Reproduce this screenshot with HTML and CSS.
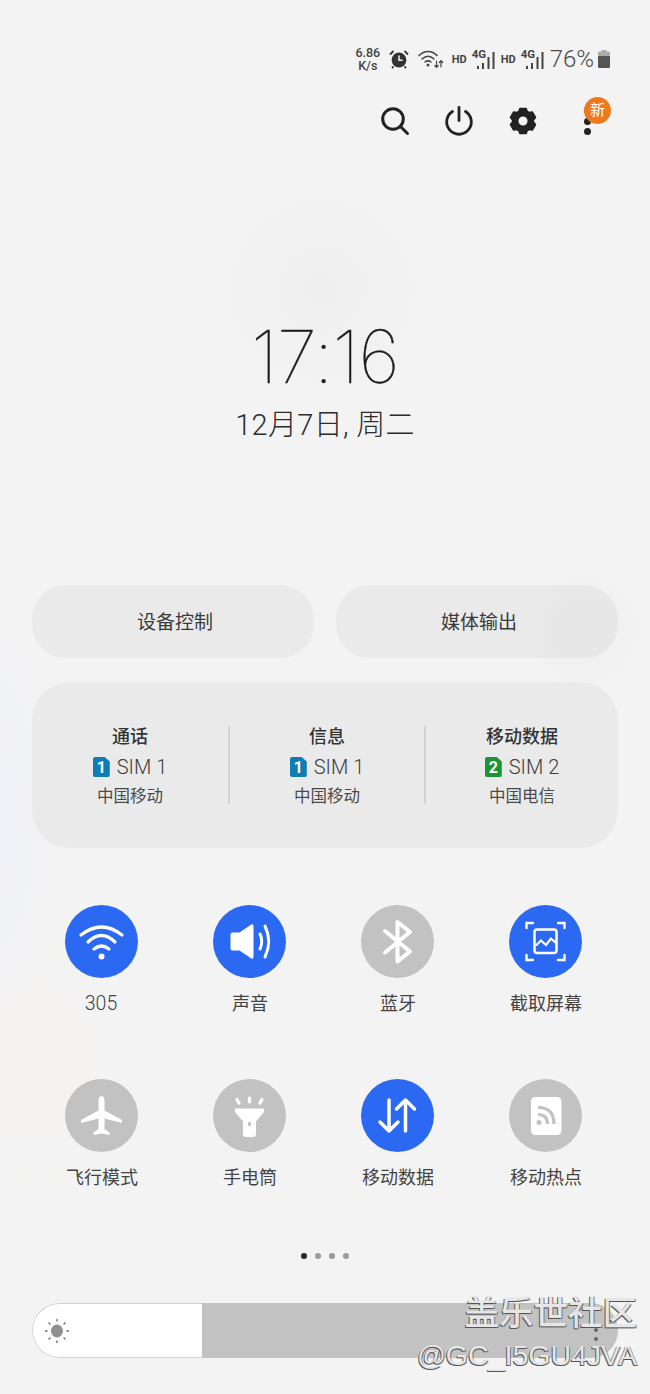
FILE: index.html

```html
<!DOCTYPE html>
<html lang="zh-CN">

<head>
    <meta charset="UTF-8">
    <meta name="viewport" content="width=device-width, initial-scale=1.0">
    <title>快捷面板</title>
    <link rel="stylesheet" href="styles.css">
</head>

<body>
    <div class="panel">

        <!-- status bar -->
        <div class="status">
            <div class="speed"><span>6.86</span><span>K/s</span></div>
            <svg class="alarm" viewBox="0 0 20 20" width="20" height="20">
                <circle cx="10" cy="11" r="7.4" fill="#333"/>
                <path d="M10 6.5v4.8h3.6" fill="none" stroke="#f3f3f3" stroke-width="1.5"/>
                <path d="M1 5.5 4.5 2M19 5.5 15.500 2M4.500 17.500 3 19M15.500 17.500 17 19" stroke="#333" stroke-width="1.8" fill="none"/>
            </svg>
            <svg class="wifi-small" viewBox="0 0 26 20" width="26" height="20">
                <g fill="none" stroke="#444" stroke-width="1.5" stroke-linecap="round">
                    <path d="M1 6.500C6.500 1 14 1 19 6.500"/>
                    <path d="M4 10c4-3.500 8.500-3.500 12 0"/>
                    <path d="M7 13c2-1.500 4-1.500 6 0"/>
                    <path d="M18.500 12v6M16.800 16.500l1.700 1.800 1.700-1.800M23 18v-6M21.300 13.500l1.700-1.800 1.700 1.800" stroke-width="1.200"/>
                </g>
                <circle cx="10" cy="16" r="1.500" fill="#444"/>
            </svg>
            <span class="hd">HD</span>
            <div class="net">
                <span>4G</span>
                <svg viewBox="0 0 18 17" width="18" height="17"><path d="M1 17v-3M6 17v-6M11.500 17V5M16.500 17V0" stroke="#444" stroke-width="2"/></svg>
            </div>
            <span class="hd second">HD</span>
            <div class="net">
                <span>4G</span>
                <svg viewBox="0 0 18 17" width="18" height="17"><path d="M1 17v-3M6 17v-6M11.500 17V5M16.500 17V0" stroke="#444" stroke-width="2"/></svg>
            </div>
            <span class="percent">76%</span>
            <svg class="battery" viewBox="0 0 14 20" width="14" height="20">
                <path d="M4.500 1h5v2h-5z" fill="#aaa"/>
                <rect x="1" y="2.500" width="12" height="5" rx="1.500" fill="#aaa"/>
                <path d="M1 7h12v10.500a1.500 1.500 0 0 1-1.500 1.500h-9A1.500 1.500 0 0 1 1 17.500z" fill="#555"/>
            </svg>
        </div>

        <!-- top actions -->
        <div class="actions">
            <svg class="action" viewBox="0 0 32 32" width="32" height="32">
                <circle cx="14" cy="14" r="10.300" fill="none" stroke="#222" stroke-width="3"/>
                <path d="M21.500 21.500 28.500 28.500" stroke="#222" stroke-width="3" stroke-linecap="round"/>
            </svg>
            <svg class="action" viewBox="0 0 32 32" width="32" height="32">
                <path d="M9.500 6.500a12.300 12.300 0 1 0 13 0" fill="none" stroke="#222" stroke-width="2.800" stroke-linecap="round"/>
                <path d="M16 2.500v13" stroke="#222" stroke-width="2.800" stroke-linecap="round"/>
            </svg>
            <svg class="action" viewBox="0 0 32 32" width="32" height="32">
                <path fill="#222" stroke="#222" stroke-width="1.500" stroke-linejoin="round" fill-rule="evenodd" d="M12.860 3.390H19.140L20.270 6.410 22.170 7.510 25.350 6.970 28.500 12.420 26.440 14.900V17.100L28.500 19.580 25.350 25.030 22.170 24.490 20.270 25.590 19.140 28.610H12.860L11.730 25.590 9.830 24.490 6.650 25.030 3.500 19.580 5.560 17.100V14.900L3.500 12.420 6.650 6.970 9.830 7.510 11.730 6.410zM21.300 16a5.300 5.300 0 1 0-10.600 0 5.300 5.300 0 1 0 10.600 0z"/>
            </svg>
            <div class="more">
                <i></i><i></i><i></i>
                <span class="badge">新</span>
            </div>
        </div>

        <!-- clock -->
        <div class="clock">17:16</div>
        <div class="date">12月7日, 周二</div>

        <!-- two pills -->
        <div class="pills">
            <div class="pill">设备控制</div>
            <div class="pill">媒体输出</div>
        </div>

        <!-- sim card -->
        <div class="sims">
            <div class="sim">
                <b>通话</b>
                <div class="sim-name"><span class="sim-tag">1</span>SIM 1</div>
                <small>中国移动</small>
            </div>
            <div class="sim">
                <b>信息</b>
                <div class="sim-name"><span class="sim-tag">1</span>SIM 1</div>
                <small>中国移动</small>
            </div>
            <div class="sim">
                <b>移动数据</b>
                <div class="sim-name"><span class="sim-tag green">2</span>SIM 2</div>
                <small>中国电信</small>
            </div>
        </div>

        <!-- toggles -->
        <div class="toggles">
            <div class="toggle">
                <div class="circle on">
                    <svg viewBox="0 0 73 73" width="73" height="73">
                        <g fill="none" stroke="#fff" stroke-width="3.200" stroke-linecap="round">
                            <path d="M16 30Q36.500 14 57 30"/>
                            <path d="M23 37Q36.500 24 50 37"/>
                            <path d="M29 44Q36.500 38 44 44"/>
                        </g>
                        <circle cx="36.500" cy="51.500" r="3" fill="#fff"/>
                    </svg>
                </div>
                <span class="wifi-name">305</span>
            </div>
            <div class="toggle">
                <div class="circle on">
                    <svg viewBox="0 0 73 73" width="73" height="73">
                        <path d="M17.500 29.500q0-2 2-2h7L37.500 20q3-2 3 1.500v30q0 3.500-3 1.500L26.500 45.500h-7q-2 0-2-2z" fill="#fff"/>
                        <g fill="none" stroke="#fff" stroke-width="3" stroke-linecap="round">
                            <path d="M47 29q3.500 7.500 0 15"/>
                            <path d="M52 21q7.500 15.500 0 31"/>
                        </g>
                    </svg>
                </div>
                <span>声音</span>
            </div>
            <div class="toggle">
                <div class="circle">
                    <svg viewBox="0 0 73 73" width="73" height="73">
                        <path d="M24 26 49 46.500 36.500 56.500V17L49 27 24 47.500" fill="none" stroke="#fff" stroke-width="4" stroke-linecap="round" stroke-linejoin="round"/>
                    </svg>
                </div>
                <span>蓝牙</span>
            </div>
            <div class="toggle">
                <div class="circle on">
                    <svg viewBox="0 0 73 73" width="73" height="73">
                        <g fill="none" stroke="#fff">
                            <path d="M17.500 23v-5H24M49 18h6.500v5M17.500 50v5H24M49 55h6.500v-5" stroke-width="2.400" stroke-linecap="round"/>
                            <rect x="25.500" y="24.500" width="22" height="23.500" rx="2.500" stroke-width="2.500"/>
                            <path d="M27 40.500 32 35.500 37 40 42 33.500 47 38" stroke-width="2.200"/>
                        </g>
                    </svg>
                </div>
                <span>截取屏幕</span>
            </div>

            <div class="toggle">
                <div class="circle">
                    <svg viewBox="0 0 73 73" width="73" height="73">
                        <path d="M36.500 17q3 0 3 6v8.500L57 41v3l-17.500-4.500V50l5 3.500V56l-8-1.500-8 1.500v-2.500l5-3.500V39.500L16 44v-3l17.500-9.500V23q0-6 3-6z" fill="#fff"/>
                    </svg>
                </div>
                <span>飞行模式</span>
            </div>
            <div class="toggle">
                <div class="circle">
                    <svg viewBox="0 0 73 73" width="73" height="73">
                        <path d="M22 29.500h29v3.500l-8 9.500V55q0 3-3 3h-7q-3 0-3-3V42.500L22 33z" fill="#fff"/>
                        <rect x="35" y="43" width="3" height="4" rx="1" fill="#c2c2c2"/>
                        <path d="M24 20.500l2 3.500M36.500 19v4M49 20.500l-2 3.500" stroke="#fff" stroke-width="3.200" stroke-linecap="round"/>
                    </svg>
                </div>
                <span>手电筒</span>
            </div>
            <div class="toggle">
                <div class="circle on">
                    <svg viewBox="0 0 73 73" width="73" height="73">
                        <g fill="none" stroke="#fff" stroke-width="3.500" stroke-linecap="round" stroke-linejoin="round">
                            <path d="M28 21v31M19 43l9 9 9-9"/>
                            <path d="M44.500 52V21M35.500 30l9-9 9 9"/>
                        </g>
                    </svg>
                </div>
                <span>移动数据</span>
            </div>
            <div class="toggle">
                <div class="circle">
                    <svg viewBox="0 0 73 73" width="73" height="73">
                        <rect x="22" y="18" width="30.500" height="38" rx="4.500" fill="#fff"/>
                        <g fill="none" stroke="#c2c2c2" stroke-width="3.200">
                            <path d="M29 35.500q9.500 0 9.500 9.500"/>
                            <path d="M29 28.500q16 0 16 16.500"/>
                        </g>
                        <circle cx="30" cy="43.500" r="2.500" fill="#c2c2c2"/>
                    </svg>
                </div>
                <span>移动热点</span>
            </div>
        </div>

        <div class="dots">
            <i class="active"></i><i></i><i></i><i></i>
        </div>

        <!-- brightness -->
        <div class="slider">
            <div class="slider-fill">
                <svg viewBox="0 0 26 26" width="26" height="26">
                    <ellipse cx="13" cy="13" rx="6" ry="6.500" fill="#8f8f8f"/>
                    <path d="M13 1.500v1.500M13 23v1.500M1.500 13H3M23 13h1.500M5 5l1 1M20 20l1 1M5 21l1-1M20 6l1-1" stroke="#666" stroke-width="1.300" stroke-linecap="round"/>
                </svg>
            </div>
            <div class="slider-rest"></div>
        </div>

        <div class="slider-dots"><i></i><i></i></div>

        <div class="watermark">
            <div class="wm-name">盖乐世社区</div>
            <div class="wm-user">@GC_I5GU4JVA</div>
        </div>
    </div>
</body>
</html>
```

FILE: styles.css

```css
* {
    box-sizing: border-box;
}

html, body {
    margin: 0;
    padding: 0;
}

body {
    width: 650px;
    height: 1394px;
    overflow: hidden;
    font-family: Roboto, "Noto Sans CJK SC", sans-serif;
    color: #3c3c3c;
}

.panel {
    position: relative;
    width: 650px;
    height: 1394px;
    padding-top: 46px;
    background-color: #f3f3f3;
    background-image:
        radial-gradient(circle at 322px 290px, #efefef 0, #f1f1f1 60px, rgba(243,243,243,0) 110px),
        radial-gradient(circle at 585px 630px, #eeeeee 0, rgba(243,243,243,0) 62px),
        radial-gradient(ellipse 60px 220px at 0 810px, #f0f1f7 0, rgba(243,243,243,0) 100%),
        radial-gradient(ellipse 100px 130px at 30px 1060px, #f5f2f0 0, rgba(243,243,243,0) 100%);
}

/* status bar */
.status {
    display: flex;
    align-items: center;
    justify-content: flex-end;
    height: 26px;
    padding-right: 39px;
}

.speed {
    display: flex;
    flex-direction: column;
    align-items: center;
    width: 26px;
    font-size: 12.500px;
    line-height: 13px;
    font-weight: 500;
    color: #444;
}

.alarm {
    margin-left: 8px;
}

.wifi-small {
    margin-left: 9px;
}

.hd {
    margin-left: 8px;
    font-size: 11px;
    font-weight: 700;
    color: #444;
}

.hd.second {
    margin-left: 6px;
}

.net {
    display: flex;
    align-items: flex-end;
    justify-content: flex-end;
    position: relative;
    width: 23px;
    height: 20px;
    margin-left: 5px;
}

.net span {
    position: absolute;
    left: 0;
    top: -1px;
    font-size: 11.500px;
    line-height: 13px;
    font-weight: 700;
    color: #444;
}

.percent {
    margin-left: 6px;
    font-size: 24px;
    font-weight: 300;
    color: #4a4a4a;
}

.battery {
    margin-left: 3px;
}

/* actions */
.actions {
    display: flex;
    height: 32px;
    margin-top: 33px;
    padding-left: 379px;
}

.action {
    margin-right: 32px;
}

.more {
    position: relative;
    display: flex;
    flex-direction: column;
    align-items: center;
    justify-content: space-between;
    width: 8px;
    height: 28px;
    margin: 2px 0 0 12px;
}

.more i {
    display: block;
    width: 7px;
    height: 7px;
    border-radius: 50%;
    background-color: #222;
}

.badge {
    position: absolute;
    left: 1px;
    top: -10px;
    width: 27px;
    height: 27px;
    border-radius: 50%;
    background-color: #ee7a1d;
    color: #fff;
    font-size: 15px;
    line-height: 27px;
    text-align: center;
}

/* clock */
.clock {
    height: 76px;
    margin-top: 182px;
    font-family: Inter, sans-serif;
    font-size: 73px;
    font-weight: 100;
    letter-spacing: -.8px;
    line-height: 76px;
    text-align: center;
    color: #1c1c1c;
    -webkit-text-stroke: .4px #1c1c1c;
}

.date {
    height: 36px;
    margin-top: 12px;
    font-size: 29px;
    font-weight: 300;
    letter-spacing: .3px;
    line-height: 36px;
    text-align: center;
    color: #2c2c2c;
}

/* pills */
.pills {
    display: grid;
    grid-template-columns: 282px 282px;
    gap: 22px;
    margin: 142px 32px 0;
}

.pill {
    height: 73px;
    padding-left: 4px;
    border-radius: 34px;
    background-color: rgba(0, 0, 0, .035);
    font-size: 19px;
    line-height: 75px;
    text-align: center;
    color: #3a3a3a;
}

/* sims */
.sims {
    display: grid;
    grid-template-columns: 196px 196px 194px;
    align-items: center;
    height: 166px;
    margin: 24px 32px 0;
    border-radius: 38px;
    background-color: #eaeaea;
}

.sim {
    display: flex;
    flex-direction: column;
    align-items: center;
    height: 78px;
    position: relative;
}

.sim + .sim {
    border-left: 2px solid #d2d3d3;
}

.sim b {
    margin-top: -1px;
    font-size: 18px;
    font-weight: 500;
    line-height: 24px;
    color: #333;
}

.sim-name {
    display: flex;
    align-items: center;
    margin-top: 6px;
    font-size: 20px;
    font-weight: 300;
    line-height: 24px;
}

.sim-tag {
    width: 17px;
    height: 20px;
    margin-right: 7px;
    background-color: #0f7cb4;
    clip-path: polygon(0 0, 70% 0, 100% 22%, 100% 100%, 0 100%);
    border-radius: 2px;
    font-size: 16px;
    font-weight: 700;
    line-height: 21px;
    text-align: center;
    color: #fff;
}

.sim-tag.green {
    background-color: #1d9338;
}

.sim small {
    margin-top: 6px;
    font-size: 16.500px;
    line-height: 24px;
    color: #4a4a4a;
}

/* toggles */
.toggles {
    display: grid;
    grid-template-columns: repeat(4, 148px);
    grid-auto-rows: 174px;
    margin: 57px 0 0 27px;
}

.toggle {
    display: flex;
    flex-direction: column;
    align-items: center;
    font-size: 18px;
    line-height: 24px;
    color: #444;
}

.toggle span {
    padding-left: 2px;
}

.toggle .wifi-name {
    padding-left: 0;
    font-size: 19.500px;
    font-weight: 300;
}

.circle {
    width: 73px;
    height: 73px;
    margin-bottom: 14px;
    border-radius: 50%;
    background-color: #c2c2c2;
}

.circle svg {
    display: block;
}

.circle.on {
    background-color: #2c69f2;
}

/* page dots */
.dots {
    display: flex;
    justify-content: center;
    gap: 8px;
    height: 6px;
    padding-right: 1px;
}

.dots i {
    width: 6px;
    height: 6px;
    border-radius: 50%;
    background-color: #9a9a9a;
}

.dots i.active {
    background-color: #2a2a2a;
}

/* brightness */
.slider {
    display: flex;
    height: 55px;
    margin: 44px 32px 0;
    border-radius: 28px;
    overflow: hidden;
}

.slider-fill {
    display: flex;
    align-items: center;
    width: 170px;
    padding-left: 11px;
    background-color: #fff;
    border: 1px solid #d5d1d3;
    border-right: none;
    border-radius: 28px 0 0 28px;
}

.slider-rest {
    flex: 1;
    background-color: #c2c2c2;
}

.slider-dots {
    position: absolute;
    left: 594px;
    top: 1328px;
    display: flex;
    flex-direction: column;
    gap: 5px;
}

.slider-dots i {
    width: 4px;
    height: 4px;
    border-radius: 50%;
    background-color: #666;
}

/* watermark over the slider */
.watermark {
    position: absolute;
    right: 13px;
    top: 1291px;
    text-align: right;
    color: #e6e6e6;
    text-shadow: -1px 1px 0 #555, 1px 1px 0 #777;
}

.wm-name {
    font-size: 34.500px;
    font-weight: 500;
    line-height: 44px;
}

.wm-user {
    margin-top: 2px;
    font-family: "Liberation Sans", sans-serif;
    font-size: 28.500px;
    line-height: 36px;
}
```
